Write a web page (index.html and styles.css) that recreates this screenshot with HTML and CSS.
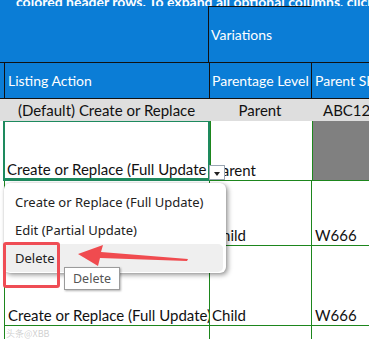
FILE: index.html
```html
<!DOCTYPE html>
<html lang="en">
  <head>
    <meta charset="UTF-8" />
    <link rel="stylesheet" href="styles.css">
    <title>Listing Action</title>
  </head>
  <body>
    <div class="sheet">
      <!-- 青いヘッダー -->
      <div class="banner">
        <div class="banner-text">colored header rows. To expand all optional columns, click</div>
        <div class="banner-row">
          <div class="spacer"></div>
          <div class="variations">Variations</div>
        </div>
      </div>

      <div class="row head">
        <div class="cell c1">Listing Action</div>
        <div class="cell c2">Parentage Level</div>
        <div class="cell c3">Parent SKU</div>
      </div>

      <div class="row default">
        <div class="cell c1">(Default) Create or Replace</div>
        <div class="cell c2">Parent</div>
        <div class="cell c3">ABC123</div>
      </div>

      <div class="row data r1">
        <div class="cell c1 selected">Create or Replace (Full Update</div>
        <div class="cell c2">Parent</div>
        <div class="cell c3 filled"></div>
      </div>
      <div class="row data r2">
        <div class="cell c1"></div>
        <div class="cell c2">Child</div>
        <div class="cell c3">W666</div>
      </div>
      <div class="row data r3">
        <div class="cell c1">Create or Replace (Full Update)</div>
        <div class="cell c2">Child</div>
        <div class="cell c3">W666</div>
      </div>
      <div class="row data r4">
        <div class="cell c1"></div>
        <div class="cell c2"></div>
        <div class="cell c3"></div>
      </div>

      <!-- ドロップダウン -->
      <div class="drop-btn"><span class="tri"></span></div>
      <ul class="menu">
        <li>Create or Replace (Full Update)</li>
        <li>Edit (Partial Update)</li>
        <li class="hover">Delete</li>
      </ul>
      <div class="tooltip">Delete</div>
      <div class="mark"></div>
      <svg class="arrow" width="120" height="30" viewBox="0 0 120 30">
        <polygon points="2,10 27,1 25,8 112,15 111,17 24,14 22,22" fill="#f04b4f" />
      </svg>
      <div class="watermark">头条@XBB</div>
    </div>
  </body>
</html>
```

FILE: styles.css
```css
/* 基本設定 */
* {
  margin: 0;
  padding: 0;
  box-sizing: border-box;
}

body {
  background-color: #fff;
  width: 369px;
  height: 339px;
  overflow: hidden;
  font-family: Lato, "Liberation Sans", sans-serif;
  font-size: 15px;
  color: #111;
}

.sheet {
  position: relative;
  width: 369px;
  height: 339px;
  overflow: hidden;
}

/* ヘッダー */
.banner {
  height: 62px;
  background-color: #0b7dd6;
  color: #fff;
  font-size: 14px;
}

.banner-text {
  height: 6px;
  overflow: hidden;
  white-space: nowrap;
  font-weight: bold;
  padding-left: 16px;
  line-height: 4px;
}

.banner-row {
  display: flex;
  height: 56px;
}

.spacer {
  width: 208px;
}

.variations {
  width: 103px;
  border-left: 1px solid #111;
  border-top: 1px solid #111;
  padding: 19px 0 0 2px;
}

.row {
  display: flex;
}

.cell {
  white-space: nowrap;
  overflow: hidden;
}

.c1 {
  width: 209px;
  margin-left: 4px;
  padding-left: 3px;
}

.c2 {
  width: 102px;
  padding-left: 2px;
}

.c3 {
  flex: 1;
  padding-left: 3px;
}

.head {
  height: 37px;
  background-color: #0b7dd6;
  color: #fff;
  font-size: 14px;
  border-top: 1px solid #111;
  border-bottom: 1px solid #111;
  align-items: center;
}

.head .cell {
  height: 100%;
  display: flex;
  align-items: center;
  border-left: 1px solid #111;
}

.head .c1 {
  width: 205px;
}

.default {
  height: 22px;
  background-color: #dedede;
  align-items: center;
}

.default .cell {
  flex-shrink: 0;
  text-align: center;
  padding-left: 0;
}

.default .c1 {
  width: 205px;
}

.default .c3 {
  flex: none;
  width: 80px;
}

.data .cell {
  display: flex;
  align-items: flex-end;
  padding-bottom: 1px;
  border-left: 1px solid #1d861d;
  border-bottom: 1px solid #1d861d;
}

.data .c1 {
  width: 205px;
}

.r1 {
  height: 60px;
}

.r2 {
  height: 65px;
}

.r3 {
  height: 80px;
}

.r4 {
  height: 20px;
}

.filled {
  background-color: #808080;
}

.selected {
  border: 2px solid #1e8a5e !important;
  border-top-width: 1px !important;
  border-bottom-width: 3px !important;
  margin-left: 3px;
  width: 207px !important;
  padding-left: 2px;
  padding-bottom: 0 !important;
}

/* ドロップダウン */
.drop-btn {
  position: absolute;
  left: 209px;
  top: 165px;
  width: 16px;
  height: 15px;
  background-color: #fff;
  border: 1px solid #9aa6b3;
}

.tri {
  position: absolute;
  left: 4px;
  top: 6px;
  border-left: 3.5px solid transparent;
  border-right: 3.5px solid transparent;
  border-top: 4px solid #222;
}

.menu {
  position: absolute;
  left: 4px;
  top: 183px;
  width: 222px;
  height: 90px;
  list-style: none;
  background-color: #fff;
  border-radius: 6px;
  box-shadow: 2px 2px 5px rgba(0, 0, 0, 0.4), 0 0 2px rgba(0, 0, 0, 0.15);
  padding: 5px 3px 2px 1px;
  font-family: "Noto Sans", sans-serif;
  font-size: 13px;
  color: #222;
}

.menu li {
  height: 28px;
  line-height: 28px;
  padding-left: 10px;
  border-radius: 5px;
}

.menu .hover {
  background-color: #efefef;
}

.tooltip {
  position: absolute;
  left: 64px;
  top: 267px;
  width: 56px;
  height: 23px;
  background-color: #fff;
  border: 1px solid #9b9b9b;
  box-shadow: 1px 1px 2px rgba(0, 0, 0, 0.3);
  font-family: "Noto Sans", sans-serif;
  font-size: 12.5px;
  color: #555;
  text-align: center;
  line-height: 21px;
}

/* 赤い枠と矢印 */
.mark {
  position: absolute;
  left: 3px;
  top: 242px;
  width: 57px;
  height: 46px;
  border: 3px solid #ef4d55;
  border-radius: 3px;
}

.arrow {
  position: absolute;
  left: 76px;
  top: 244px;
}

.watermark {
  position: absolute;
  left: 6px;
  top: 327px;
  font-family: "Noto Sans CJK SC", sans-serif;
  font-size: 9px;
  color: rgba(160, 160, 160, 0.5);
}
```
